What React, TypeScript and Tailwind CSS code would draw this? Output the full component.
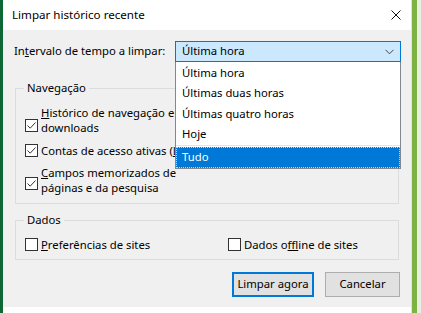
const font = "font-['Noto_Sans',sans-serif]";

function CheckBox({ checked }: { checked: boolean }) {
  return (
    <span className="flex h-[13px] w-[13px] shrink-0 items-center justify-center border border-[#333333] bg-white">
      {checked && (
        <svg width="11" height="11" viewBox="0 0 11 11" fill="none">
          <path d="M1.5 5.5 L4.2 8.2 L9.5 2.5" stroke="#333333" strokeWidth="1" />
        </svg>
      )}
    </span>
  );
}

const options = ["Última hora", "Últimas duas horas", "Últimas quatro horas", "Hoje"];

export default function App() {
  return (
    <div className={`flex h-[313px] w-[421px] overflow-hidden bg-[#0e6836] text-[11.3px] text-black ${font}`}>
      <div className="w-[3px] shrink-0" />

      <div className="flex w-[408px] shrink-0 flex-col bg-white">
        {/* title bar */}
        <div className="flex h-[30px] items-center justify-between pl-[9px] pr-[10px]">
          <span className="text-[11.6px]">Limpar histórico recente</span>
          <svg width="10" height="10" viewBox="0 0 10 10" fill="none">
            <path d="M0.5 0.5 L9.5 9.5 M9.5 0.5 L0.5 9.5" stroke="#111111" strokeWidth="1" />
          </svg>
        </div>

        <div className="relative flex h-[277px] flex-col bg-[#f0f0f0]">
          {/* time range row */}
          <div className="mt-[11px] flex items-center pl-[11px]">
            <span className="w-[161px]">
              In<span className="underline">t</span>ervalo de tempo a limpar:
            </span>
            <div className="flex h-[21px] w-[226px] items-center justify-between border border-[#0078d7] bg-[#cce8ff] pl-[6px] pr-[6px]">
              <span>Última hora</span>
              <svg width="9" height="6" viewBox="0 0 9 6" fill="none">
                <path d="M0.5 0.8 L4.5 4.8 L8.5 0.8" stroke="#444444" strokeWidth="1" />
              </svg>
            </div>
          </div>

          {/* Navegação */}
          <fieldset className="ml-[12px] mt-[18px] h-[124px] w-[384px] border border-[#dcdcdc] pl-[9px]">
            <legend className="ml-[-1px] px-[3px] leading-[16px]">Navegação</legend>
            <div className="mt-[9px] flex items-start gap-[3px] leading-[15px]">
              <span className="mt-[14px]"><CheckBox checked /></span>
              <span className="w-[134px] overflow-hidden whitespace-nowrap">
                <span className="underline">H</span>istórico de navegação e
                <br />
                downloads
              </span>
            </div>
            <div className="mt-[8px] flex items-center gap-[3px] leading-[15px]">
              <CheckBox checked />
              <span className="w-[134px] overflow-hidden whitespace-nowrap">
                Contas de acesso ativas (<span className="underline">L</span>ogin)
              </span>
            </div>
            <div className="mt-[7px] flex items-start gap-[3px] leading-[15px]">
              <span className="mt-[12px]"><CheckBox checked /></span>
              <span>
                <span className="underline">C</span>ampos memorizados de
                <br />
                páginas e da pesquisa
              </span>
            </div>
          </fieldset>

          {/* Dados */}
          <fieldset className="ml-[12px] mt-[8px] h-[48px] w-[384px] border border-[#dcdcdc] pl-[9px]">
            <legend className="ml-[-1px] px-[3px] leading-[16px]">Dados</legend>
            <div className="mt-[9px] flex items-center leading-[15px]">
              <div className="flex w-[203px] items-center gap-[3px]">
                <CheckBox checked={false} />
                <span>
                  <span className="underline">P</span>referências de sites
                </span>
              </div>
              <div className="flex items-center gap-[3px]">
                <CheckBox checked={false} />
                <span>
                  Dados o<span className="underline">f</span>fline de sites
                </span>
              </div>
            </div>
          </fieldset>

          {/* buttons */}
          <div className="mt-[12px] flex justify-end gap-[11px] pr-[11px]">
            <button className="h-[25px] w-[82px] border-2 border-[#0078d7] bg-[#e1e1e1]">Limpar agora</button>
            <button className="h-[25px] w-[75px] border border-[#adadad] bg-[#e1e1e1]">Cancelar</button>
          </div>

          {/* open dropdown list */}
          <div className="absolute left-[172px] top-[32px] w-[226px] border border-t-0 border-[#828790] bg-white pt-[1px]">
            {options.map((o) => (
              <div key={o} className="flex h-[20.5px] items-center pl-[6px]">
                {o}
              </div>
            ))}
            <div className="h-[1px] bg-[#e3e3e3]" />
            <div className="mt-[1px] flex h-[21px] items-center border border-dotted border-[#b9d6f2] bg-[#0078d7] pl-[5px] text-white">
              Tudo
            </div>
          </div>
        </div>
        <div className="h-[6px]" />
      </div>

      <div className="w-[1px] shrink-0 bg-[#dfe6d7]" />
      <div className="w-[5px] shrink-0 bg-[#7cb342]" />
      <div className="w-[4px] shrink-0 bg-[#e9eee4]" />
    </div>
  );
}
